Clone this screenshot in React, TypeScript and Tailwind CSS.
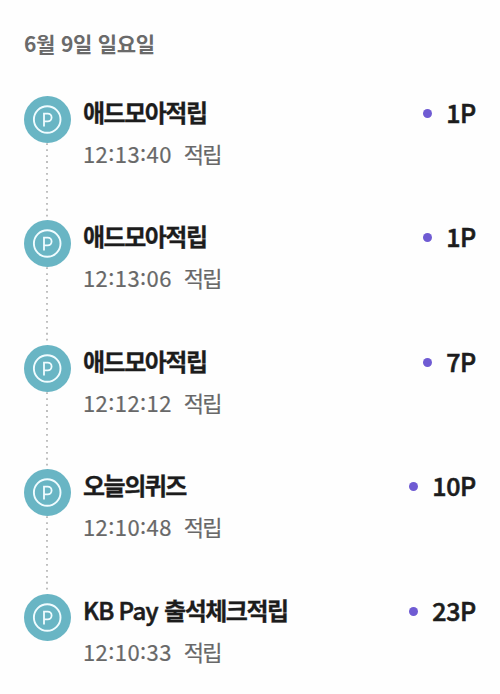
type PointEntry = {
  title: string;
  prefix?: string;
  time: string;
  amount: string;
};

const entries: PointEntry[] = [
  { title: "애드모아적립", time: "12:13:40", amount: "1P" },
  { title: "애드모아적립", time: "12:13:06", amount: "1P" },
  { title: "애드모아적립", time: "12:12:12", amount: "7P" },
  { title: "오늘의퀴즈", time: "12:10:48", amount: "10P" },
  { title: "출석체크적립", prefix: "KB Pay", time: "12:10:33", amount: "23P" },
];

const PointIcon = () => (
  <svg viewBox="0 0 47 47" className="block h-[47px] w-[47px] shrink-0" fill="none">
    <circle cx="23.5" cy="23.5" r="23.5" fill="#69b5c4" />
    <circle cx="23.2" cy="23.5" r="13.3" stroke="#f0fcff" strokeWidth="1.9" />
    <path d="M20 30.6V17.6H23.7a3.9 3.9 0 0 1 0 7.8H20" stroke="#f0fcff" strokeWidth="1.8" />
  </svg>
);

// Dotted connector between two icons
const Connector = () => (
  <svg className="mr-px block w-1 flex-1" viewBox="0 0 4 78" preserveAspectRatio="none">
    <path d="M2 0.2V78" stroke="#b4b4b4" strokeWidth="1.7" strokeDasharray="1.8 4.2" />
  </svg>
);

// Colons sit at the middle of the digit height
const TimeText = ({ value }: { value: string }) => (
  <span className="flex tracking-[0.4px]">
    {value.split(/(:)/).map((part, index) => (
      <span key={index} className={part === ":" ? "-translate-y-[2px]" : ""}>
        {part}
      </span>
    ))}
  </span>
);

const App = () => {
  return (
    <main className="h-[694px] w-[500px] overflow-hidden bg-[#fefefe] pl-6 pr-6 font-['Noto_Sans_CJK_KR',sans-serif]">
      <h2 className="flex h-[95.6px] items-start gap-[6px] whitespace-nowrap pt-[28px] text-[21px] font-bold leading-[30px] tracking-[-0.4px] text-[#6a6a6a]">
        <span>6월</span>
        <span>9일</span>
        <span>일요일</span>
      </h2>

      <ul>
        {entries.map((entry, index) => (
          <li key={entry.time} className="flex h-[124.6px]">
            <div className="flex w-[47px] shrink-0 flex-col items-center">
              <PointIcon />
              {index < entries.length - 1 && <Connector />}
            </div>

            <div className="-mt-[1px] ml-3 min-w-0 flex-1 whitespace-nowrap">
              <div className="flex h-[34px] items-center justify-between text-[#1c1c1c]">
                <h3 className="flex gap-[6px] text-[24px] font-bold leading-[34px] tracking-[-1.5px]">
                  {entry.prefix && (
                    <span className="font-medium tracking-[-0.6px] [-webkit-text-stroke:0.6px]">{entry.prefix}</span>
                  )}
                  <span className="[-webkit-text-stroke:0.3px]">{entry.title}</span>
                </h3>
                <div className="flex items-center gap-[14px]">
                  <span className="mt-[3px] h-[9px] w-[9px] rounded-full bg-[#6f5bd3]" />
                  <span className="text-[25px] font-medium leading-[34px] tracking-[-0.3px] [-webkit-text-stroke:0.6px]">
                    {entry.amount}
                  </span>
                </div>
              </div>
              <p className="mt-[7px] flex gap-[12px] text-[22px] leading-[34px] text-[#686868] [-webkit-text-stroke:0.2px]">
                <TimeText value={entry.time} />
                <span className="tracking-[-1.7px]">적립</span>
              </p>
            </div>
          </li>
        ))}
      </ul>
    </main>
  );
};

export default App;
